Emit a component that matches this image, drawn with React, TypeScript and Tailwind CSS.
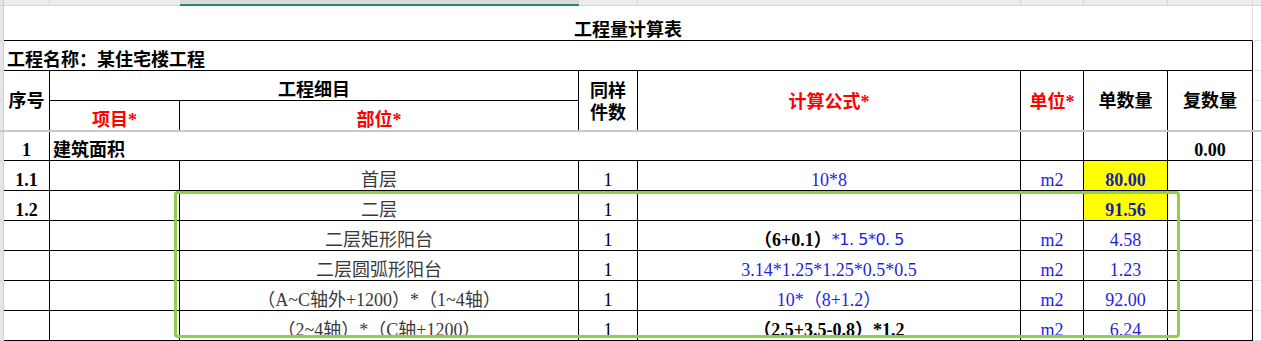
import React from "react";

const cols = "grid grid-cols-[4px_46px_130px_399px_59px_383px_63px_84px_85px_8px]";
const serif = "font-['Liberation_Serif','Noto_Sans_CJK_SC',serif]";
const cell = "border-r border-b border-black flex justify-center items-end leading-[20px]";
const gut = "bg-[#e6e6e6] border-r border-b border-r-[#cfcfcf] border-b-[#d6d6d6]";
const fill = "border-b border-[#e1e1e1]";
const blue = "text-[#1f1fe0]";

type Row = {
  seq: string;
  part: string;
  formula: React.ReactNode;
  unit: string;
  qty: string;
  hi?: boolean;
};

const rows: Row[] = [
  { seq: "1.1", part: "首层", formula: <span className={blue}>10*8</span>, unit: "m2", qty: "80.00", hi: true },
  { seq: "1.2", part: "二层", formula: null, unit: "", qty: "91.56", hi: true },
  {
    seq: "",
    part: "二层矩形阳台",
    formula: (
      <>
        <span className="font-bold text-black">（6+0.1）</span>
        <span className={"text-[16px] font-['DejaVu_Sans',sans-serif] tracking-[-0.5px] " + blue}>*1. 5*0. 5</span>
      </>
    ),
    unit: "m2",
    qty: "4.58",
  },
  { seq: "", part: "二层圆弧形阳台", formula: <span className={blue}>3.14*1.25*1.25*0.5*0.5</span>, unit: "m2", qty: "1.23" },
  { seq: "", part: "（A~C轴外+1200）*（1~4轴）", formula: <span className={blue}>10*（8+1.2）</span>, unit: "m2", qty: "92.00" },
  {
    seq: "",
    part: "（2~4轴）*（C轴+1200）",
    formula: <span className="font-bold text-black">（2.5+3.5-0.8）*1.2</span>,
    unit: "m2",
    qty: "6.24",
  },
];

export default function App() {
  return (
    <div className={"relative w-[1261px] h-[341px] overflow-hidden bg-white text-[18px] text-black " + serif}>
      {/* sheet column headers, cropped */}
      <div className={cols + " h-[6px]"}>
        <div className="bg-[#e6e6e6] border-r border-b border-[#cfcfcf]" />
        <div className="bg-[#ececec] border-r border-b border-[#d6d6d6]" />
        <div className="bg-[#ececec] border-b border-[#d6d6d6]" />
        <div className="bg-[#dadada] border-b-2 border-[#1e8e5e]" />
        <div className="bg-[#ececec] border-r border-b border-[#d6d6d6]" />
        <div className="bg-[#ececec] border-r border-b border-[#d6d6d6]" />
        <div className="bg-[#ececec] border-r border-b border-[#d6d6d6]" />
        <div className="bg-[#ececec] border-r border-b border-[#d6d6d6]" />
        <div className="bg-[#ececec] border-r border-b border-[#d6d6d6]" />
        <div className="bg-[#ececec] border-b border-[#d6d6d6]" />
      </div>

      {/* frozen header */}
      <div className={cols + " grid-rows-[35px_30px_30px_29px]"}>
        <div className={gut} />
        <div className="col-span-8 border-b border-b-black border-r border-r-[#e1e1e1] flex justify-center items-end leading-[20px] font-bold">
          工程量计算表
        </div>
        <div className={fill} />

        <div className={gut} />
        <div className="col-span-8 border-r border-b border-black flex items-end leading-[20px] pl-[3px] font-bold">
          工程名称：某住宅楼工程
        </div>
        <div className={fill} />

        <div className={gut} />
        <div className="row-span-2 border-r border-black flex items-center justify-center font-bold pt-[2px]">序号</div>
        <div className={"col-span-2 font-bold " + cell}>工程细目</div>
        <div className="row-span-2 border-r border-black flex flex-col items-center justify-center font-bold leading-[22px] pt-[2px]">
          <span>同样</span>
          <span>件数</span>
        </div>
        <div className="row-span-2 border-r border-black flex items-center justify-center font-bold text-[#ff0000] pt-[4px]">计算公式*</div>
        <div className="row-span-2 border-r border-black flex items-center justify-center font-bold text-[#ff0000] pt-[4px]">单位*</div>
        <div className="row-span-2 border-r border-black flex items-center justify-center font-bold pt-[2px]">单数量</div>
        <div className="row-span-2 border-r border-black flex items-center justify-center font-bold pt-[2px]">复数量</div>
        <div className={fill} />

        <div className="bg-[#e6e6e6] border-r border-[#cfcfcf]" />
        <div className="border-r border-black flex justify-center items-end leading-[20px] font-bold text-[#ff0000]">项目*</div>
        <div className="border-r border-black flex justify-center items-end leading-[20px] font-bold text-[#ff0000]">部位*</div>
        <div />
      </div>

      <div className="h-[2px] bg-[#c8c8c8]" />

      {/* body */}
      <div className={cols + " grid-rows-[29px_repeat(6,30px)]"}>
        <div className={gut} />
        <div className={"font-bold " + cell}>1</div>
        <div className="col-span-4 border-r border-b border-black flex items-end leading-[20px] pl-[3px] font-bold">建筑面积</div>
        <div className={cell} />
        <div className={cell} />
        <div className={"font-bold " + cell}>0.00</div>
        <div className={fill} />

        {rows.map((r, i) => (
          <React.Fragment key={i}>
            <div className={gut} />
            <div className={"font-bold " + cell}>{r.seq}</div>
            <div className={cell} />
            <div className={"text-[#3a3a3a] whitespace-nowrap " + cell}>{r.part}</div>
            <div className={cell}>1</div>
            <div className={"whitespace-nowrap " + cell}>{r.formula}</div>
            <div className={blue + " " + cell}>{r.unit}</div>
            <div className={(r.hi ? "bg-[#ffff00] font-bold text-[#1c1ca8] " : blue + " ") + cell}>{r.qty}</div>
            <div className={cell} />
            <div className={fill} />
          </React.Fragment>
        ))}
      </div>

      {/* selection outline */}
      <div className="absolute left-[174px] top-[191px] w-[1006px] h-[147px] border-[3px] border-[#8fcf4a] rounded-[4px] pointer-events-none" />
    </div>
  );
}
